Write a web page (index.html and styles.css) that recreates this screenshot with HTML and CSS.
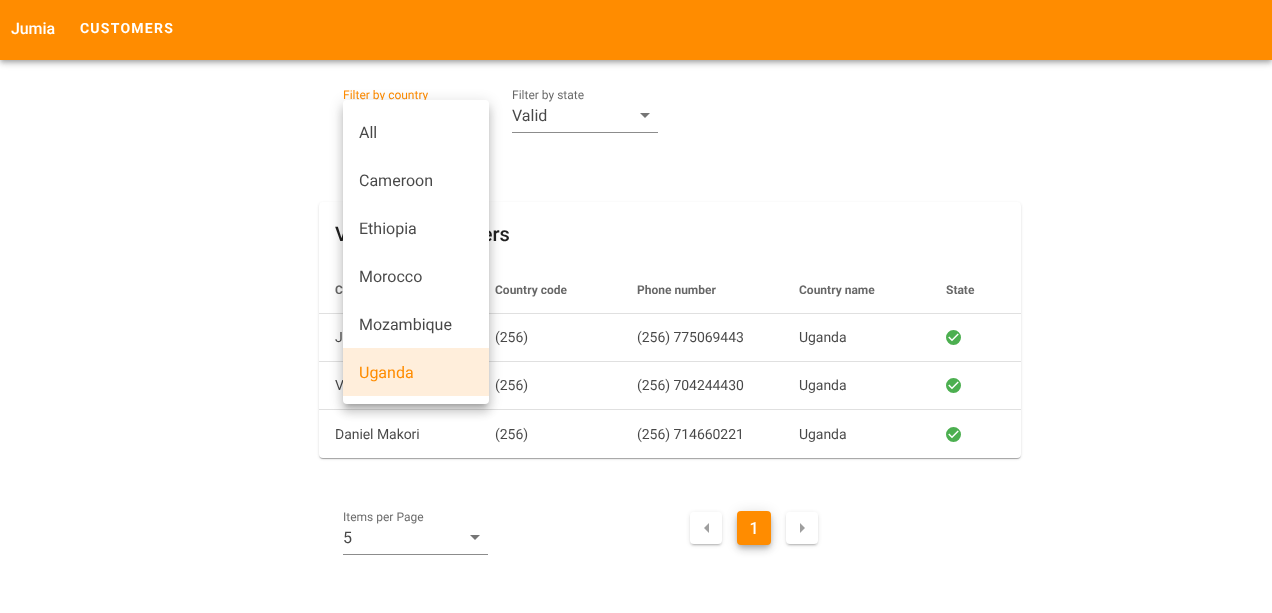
FILE: index.html
```html
<!DOCTYPE html>
<html lang="en">
<head>
<meta charset="utf-8">
<title>Jumia Customers</title>
<link rel="stylesheet" href="styles.css">
</head>
<body>
<header class="appbar">
  <span class="brand">Jumia</span>
  <a class="nav-link">CUSTOMERS</a>
</header>
<main class="main">
  <section class="filters">
    <div class="field">
      <label class="field-label active">Filter by country</label>
      <div class="field-control">
        <span class="field-value">Uganda</span>
        <svg class="caret" viewBox="0 0 10 5" aria-hidden="true"><path d="M0 0h10L5 5z"/></svg>
      </div>
      <ul class="menu">
        <li class="menu-item">All</li>
        <li class="menu-item">Cameroon</li>
        <li class="menu-item">Ethiopia</li>
        <li class="menu-item">Morocco</li>
        <li class="menu-item">Mozambique</li>
        <li class="menu-item selected">Uganda</li>
      </ul>
    </div>
    <div class="field">
      <label class="field-label">Filter by state</label>
      <div class="field-control">
        <span class="field-value">Valid</span>
        <svg class="caret" viewBox="0 0 10 5" aria-hidden="true"><path d="M0 0h10L5 5z"/></svg>
      </div>
    </div>
  </section>

  <section class="card">
    <h2 class="card-title">Valid phone owners</h2>
    <div class="row head">
      <div class="cell name">Customer name</div>
      <div class="cell code">Country code</div>
      <div class="cell phone">Phone number</div>
      <div class="cell country">Country name</div>
      <div class="cell state">State</div>
    </div>
    <div class="row">
      <div class="cell name">James Ocan</div>
      <div class="cell code">(256)</div>
      <div class="cell phone">(256) 775069443</div>
      <div class="cell country">Uganda</div>
      <div class="cell state"><svg class="ok" viewBox="2 2 20 20" aria-hidden="true"><path d="M12 2a10 10 0 1 0 0 20 10 10 0 0 0 0-20zm-2 15l-5-5 1.41-1.41L10 14.17l7.59-7.59L19 8l-9 9z"/></svg></div>
    </div>
    <div class="row">
      <div class="cell name">Victor Okello</div>
      <div class="cell code">(256)</div>
      <div class="cell phone">(256) 704244430</div>
      <div class="cell country">Uganda</div>
      <div class="cell state"><svg class="ok" viewBox="2 2 20 20" aria-hidden="true"><path d="M12 2a10 10 0 1 0 0 20 10 10 0 0 0 0-20zm-2 15l-5-5 1.41-1.41L10 14.17l7.59-7.59L19 8l-9 9z"/></svg></div>
    </div>
    <div class="row">
      <div class="cell name">Daniel Makori</div>
      <div class="cell code">(256)</div>
      <div class="cell phone">(256) 714660221</div>
      <div class="cell country">Uganda</div>
      <div class="cell state"><svg class="ok" viewBox="2 2 20 20" aria-hidden="true"><path d="M12 2a10 10 0 1 0 0 20 10 10 0 0 0 0-20zm-2 15l-5-5 1.41-1.41L10 14.17l7.59-7.59L19 8l-9 9z"/></svg></div>
    </div>
  </section>

  <section class="footer">
    <div class="field per-page">
      <label class="field-label">Items per Page</label>
      <div class="field-control">
        <span class="field-value">5</span>
        <svg class="caret" viewBox="0 0 10 5" aria-hidden="true"><path d="M0 0h10L5 5z"/></svg>
      </div>
    </div>
    <nav class="pager">
      <button class="page-btn"><svg class="arrow" viewBox="0 0 5 10" aria-hidden="true"><path d="M5 0v10L0 5z"/></svg></button>
      <button class="page-btn current">1</button>
      <button class="page-btn"><svg class="arrow" viewBox="0 0 5 10" aria-hidden="true"><path d="M0 0v10l5-5z"/></svg></button>
    </nav>
  </section>
</main>
</body>
</html>
```
FILE: styles.css
```css
* { box-sizing: border-box; }
html, body { margin: 0; padding: 0; height: 100%; overflow: hidden; }
body {
  font-family: Roboto, "Liberation Sans", sans-serif;
  color: rgba(0, 0, 0, 0.87);
  background: #fff;
  text-rendering: geometricPrecision;
}
.appbar {
  height: 60px;
  background: #ff8c00;
  color: #fff;
  display: flex;
  align-items: center;
  padding: 0 11px 4px;
  box-shadow: 0 2px 4px -1px rgba(0,0,0,.2), 0 4px 5px 0 rgba(0,0,0,.14), 0 1px 10px 0 rgba(0,0,0,.12);
}
.brand { font-size: 16px; font-weight: 500; letter-spacing: -.1px; will-change: opacity; }
.nav-link {
  margin: 2px 0 0 25px;
  font-size: 14px;
  font-weight: 700;
  letter-spacing: 1.25px;
  will-change: opacity;
}
.main { width: 702px; margin-left: 319px; will-change: opacity; }
.filters {
  display: flex;
  gap: 23px;
  padding: 28px 0 0 24px;
  height: 142px;
}
.field { position: relative; width: 146px; height: 45px; }
.field-label {
  display: block;
  font-size: 12px;
  line-height: 14px;
  color: rgba(0,0,0,.6);
}
.field-label.active { color: #ff8c00; }
.field-control {
  display: flex;
  align-items: center;
  justify-content: space-between;
  height: 31px;
  padding: 1px 8px 5px 0;
  border-bottom: 1px solid rgba(0,0,0,.45);
}
.field-value { font-size: 16px; color: rgba(0,0,0,.72); }
.caret { width: 10px; height: 5px; fill: rgba(0,0,0,.54); margin-top: 1px; }
.menu {
  position: absolute;
  top: 12px;
  left: 0;
  z-index: 5;
  width: 146px;
  margin: 0;
  padding: 8px 0;
  list-style: none;
  background: #fff;
  border-radius: 4px;
  box-shadow: 0 5px 5px -3px rgba(0,0,0,.2), 0 8px 10px 1px rgba(0,0,0,.14), 0 3px 14px 2px rgba(0,0,0,.12);
}
.menu-item {
  height: 48px;
  padding: 0 16px;
  display: flex;
  align-items: center;
  font-size: 16px;
  color: rgba(0,0,0,.72);
}
.menu-item.selected { background: #ffeedb; color: #ff8c00; }
.card {
  height: 256px;
  border-radius: 4px;
  background: #fff;
  box-shadow: 0 2px 1px -1px rgba(0,0,0,.2), 0 1px 1px 0 rgba(0,0,0,.14), 0 1px 3px 0 rgba(0,0,0,.12);
}
.card-title {
  margin: 0;
  height: 63px;
  padding: 16px 16px 0;
  font-size: 20px;
  line-height: 32px;
  font-weight: 500;
  letter-spacing: -.05px;
}
.row {
  display: grid;
  grid-template-columns: 160px 142px 162px 147px 91px;
  height: 48px;
  align-items: center;
  border-top: 1px solid #e0e0e0;
  font-size: 14px;
  letter-spacing: -.05px;
  color: rgba(0,0,0,.72);
}
.row:last-child { height: 49px; padding-top: 1px; }
.row.head {
  border-top: 0;
  padding-top: 2px;
  font-size: 12px;
  font-weight: 700;
  letter-spacing: 0;
  color: rgba(0,0,0,.6);
}
.cell { padding: 0 16px; white-space: nowrap; overflow: hidden; }
.cell.state { display: flex; }
.ok { width: 15px; height: 15px; fill: #4caf50; }
.footer {
  position: relative;
  display: flex;
  justify-content: space-between;
  padding: 52px 0 0 24px;
}
.per-page { width: 145px; }
.pager {
  display: flex;
  align-items: center;
  gap: 15px;
  height: 34px;
  margin: 1px 203px 0 0;
}
.page-btn {
  width: 32px;
  height: 32px;
  padding: 0;
  border: 0;
  border-radius: 4px;
  background: #fff;
  display: flex;
  align-items: center;
  justify-content: center;
  font-family: inherit;
  box-shadow: 0 3px 1px -2px rgba(0,0,0,.12), 0 2px 2px 0 rgba(0,0,0,.1), 0 1px 5px 0 rgba(0,0,0,.1);
}
.page-btn.current {
  width: 34px;
  height: 34px;
  background: #ff8c00;
  color: #fff;
  font-size: 16px;
  font-weight: 500;
  box-shadow: 0 3px 5px -1px rgba(0,0,0,.2), 0 5px 8px 0 rgba(0,0,0,.14), 0 1px 14px 0 rgba(0,0,0,.12);
}
.arrow { width: 5px; height: 10px; fill: rgba(0,0,0,.38); }
```
